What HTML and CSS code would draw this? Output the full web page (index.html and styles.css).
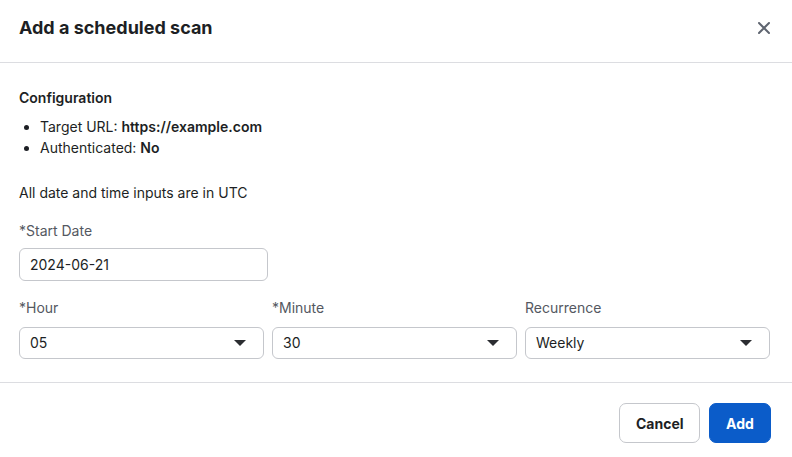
FILE: index.html
```html
<!DOCTYPE html>
<html>
<head>
<meta charset="utf-8">
<link rel="stylesheet" href="styles.css">
</head>
<body>
<div class="modal">
  <div class="header">
    <h1 class="title">Add a scheduled scan</h1>
    <button class="close" aria-label="Close">
      <svg width="12" height="12" viewBox="0 0 12 12"><path d="M1 1L11 11M11 1L1 11" stroke="#5f6570" stroke-width="2" stroke-linecap="round"/></svg>
    </button>
  </div>
  <div class="body">
    <div class="section-title">Configuration</div>
    <ul class="list">
      <li>Target URL: <b>https://example.com</b></li>
      <li>Authenticated: <b>No</b></li>
    </ul>
    <p class="note">All date and time inputs are in UTC</p>
    <div class="field date-field">
      <label class="label">*Start Date</label>
      <div class="input">2024-06-21</div>
    </div>
    <div class="row">
      <div class="field">
        <label class="label">*Hour</label>
        <div class="input select"><span>05</span><span class="caret"></span></div>
      </div>
      <div class="field">
        <label class="label">*Minute</label>
        <div class="input select"><span>30</span><span class="caret"></span></div>
      </div>
      <div class="field">
        <label class="label">Recurrence</label>
        <div class="input select"><span>Weekly</span><span class="caret"></span></div>
      </div>
    </div>
  </div>
  <div class="footer">
    <button class="btn btn-secondary">Cancel</button>
    <button class="btn btn-primary">Add</button>
  </div>
</div>
</body>
</html>
```
FILE: styles.css
```css
* { box-sizing: border-box; }
html, body { margin: 0; padding: 0; background: #fff; }
body {
  font-family: Inter, "Noto Sans", sans-serif;
  color: #1d1f24;
  font-size: 14px;
  line-height: 20px;
}
.modal { width: 792px; }
.header {
  height: 63px;
  display: flex;
  align-items: flex-start;
  justify-content: space-between;
  padding: 16px 22px 0 19px;
  border-bottom: 1px solid #dcdde1;
}
.title {
  margin: 0;
  font-size: 18px;
  line-height: 24px;
  font-weight: 700;
  color: #1d1f24;
}
.close {
  border: 0;
  background: none;
  padding: 0;
  margin-top: 6px;
  width: 12px;
  height: 12px;
  display: flex;
}
.body {
  padding: 25px 22px 23px 19px;
  border-bottom: 1px solid #dcdde1;
}
.section-title { font-weight: 600; }
.list {
  margin: 8px 0 0;
  padding-left: 21px;
}
.list li { line-height: 21px; }
.list b { font-weight: 600; }
.note { margin: 25px 0 0; }
.field { display: flex; flex-direction: column; }
.date-field { width: 249px; margin-top: 18px; }
.label { color: #545861; margin-bottom: 7px; }
.row .label { margin-bottom: 9px; }
.input {
  height: 33px;
  border: 1px solid #c5c7cc;
  border-radius: 6px;
  padding: 0 10px;
  display: flex;
  align-items: center;
  color: #1d1f24;
}
.row {
  display: grid;
  grid-template-columns: 1fr 1fr 1fr;
  gap: 8px;
  margin-top: 17px;
}
.select { justify-content: space-between; height: 32px; padding-right: 17px; }
.caret {
  width: 0; height: 0;
  border-left: 6px solid transparent;
  border-right: 6px solid transparent;
  border-top: 6px solid #2b2d31;
}
.footer {
  display: flex;
  justify-content: flex-end;
  gap: 9px;
  padding: 20px 21px 15px 19px;
}
.btn {
  height: 40px;
  border-radius: 7px;
  font-family: inherit;
  font-size: 14px;
  font-weight: 700;
  padding: 0 16px;
}
.btn-secondary {
  width: 81px;
  background: #fff;
  border: 1px solid #c5c7cc;
  color: #1d1f24;
}
.btn-primary {
  width: 62px;
  background: #0b5cc9;
  border: 1px solid #0b5cc9;
  color: #fff;
}
```
